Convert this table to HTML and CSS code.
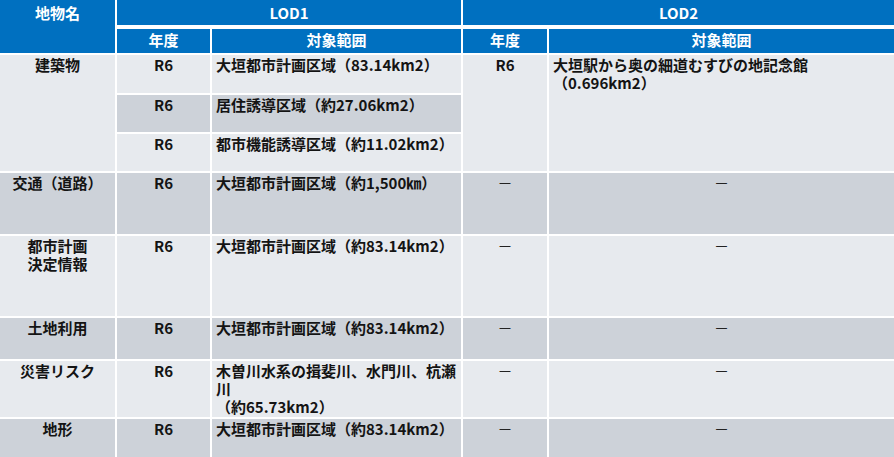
FILE: index.html
```html
<!DOCTYPE html>
<html lang="ja">
<head>
<meta charset="utf-8">
<title>3D都市モデル整備範囲</title>
<link rel="stylesheet" href="styles.css">
</head>
<body>
<table class="grid">
  <colgroup>
    <col class="c-name">
    <col class="c-year">
    <col class="c-area">
    <col class="c-year2">
    <col class="c-area2">
  </colgroup>
  <thead>
    <tr class="h-top">
      <th rowspan="2" class="name-head">地物名</th>
      <th colspan="2" class="lod">LOD1</th>
      <th colspan="2" class="lod last">LOD2</th>
    </tr>
    <tr class="h-sub">
      <th>年度</th>
      <th>対象範囲</th>
      <th>年度</th>
      <th class="last">対象範囲</th>
    </tr>
  </thead>
  <tbody>
    <tr class="r-bldg1">
      <td rowspan="3" class="name light">建築物</td>
      <td class="year light">R6</td>
      <td class="area light">大垣都市計画区域（83.14km2）</td>
      <td rowspan="3" class="year light">R6</td>
      <td rowspan="3" class="area light last">大垣駅から奥の細道むすびの地記念館<br>（0.696km2）</td>
    </tr>
    <tr class="r-bldg2">
      <td class="year dark">R6</td>
      <td class="area dark">居住誘導区域（約27.06km2）</td>
    </tr>
    <tr class="r-bldg3">
      <td class="year light">R6</td>
      <td class="area light">都市機能誘導区域（約11.02km2）</td>
    </tr>
    <tr class="r-tran">
      <td class="name dark">交通（道路）</td>
      <td class="year dark">R6</td>
      <td class="area dark">大垣都市計画区域（約1,500㎞）</td>
      <td class="year dark"><span class="dash">－</span></td>
      <td class="none dark last"><span class="dash">－</span></td>
    </tr>
    <tr class="r-urf">
      <td class="name light">都市計画<br>決定情報</td>
      <td class="year light">R6</td>
      <td class="area light">大垣都市計画区域（約83.14km2）</td>
      <td class="year light"><span class="dash">－</span></td>
      <td class="none light last"><span class="dash">－</span></td>
    </tr>
    <tr class="r-luse">
      <td class="name dark">土地利用</td>
      <td class="year dark">R6</td>
      <td class="area dark">大垣都市計画区域（約83.14km2）</td>
      <td class="year dark"><span class="dash">－</span></td>
      <td class="none dark last"><span class="dash">－</span></td>
    </tr>
    <tr class="r-risk">
      <td class="name light">災害リスク</td>
      <td class="year light">R6</td>
      <td class="area light">木曽川水系の揖斐川、水門川、杭瀬川<br>（約65.73km2）</td>
      <td class="year light"><span class="dash">－</span></td>
      <td class="none light last"><span class="dash">－</span></td>
    </tr>
    <tr class="r-dem">
      <td class="name dark">地形</td>
      <td class="year dark">R6</td>
      <td class="area dark">大垣都市計画区域（約83.14km2）</td>
      <td class="year dark"><span class="dash">－</span></td>
      <td class="none dark last"><span class="dash">－</span></td>
    </tr>
  </tbody>
</table>
</body>
</html>
```
FILE: styles.css
```css
html, body {
  margin: 0;
  padding: 0;
  background: #ffffff;
}

body {
  font-family: "Noto Sans CJK JP", "Noto Sans", sans-serif;
  font-size: 15px;
  line-height: 18px;
  color: #141414;
  overflow: hidden;
}

.grid {
  width: 894px;
  table-layout: fixed;
  border-collapse: separate;
  border-spacing: 0;
}

.c-name { width: 117px; }
.c-year { width: 95px; }
.c-area { width: 251px; }
.c-year2 { width: 86px; }
.c-area2 { width: 345px; }

.grid th,
.grid td {
  box-sizing: border-box;
  padding: 1px 4px 0;
  vertical-align: top;
  border-right: 2px solid #ffffff;
  border-bottom: 2px solid #ffffff;
  font-weight: 700;
}

.grid th {
  background: #0070c0;
  color: #ffffff;
  text-align: center;
  padding-top: 4px;
}

.grid .last {
  border-right: none;
}

.grid th.lod {
  border-bottom-width: 4px;
}

.h-top { height: 29px; }
.h-sub { height: 26px; }
.grid .h-sub th { padding-top: 2px; }

.r-bldg1 { height: 40px; }
.r-bldg2 { height: 39px; }
.r-bldg3 { height: 39px; }
.r-tran { height: 63px; }
.r-urf { height: 82px; }
.r-luse { height: 43px; }
.r-risk { height: 58px; }
.r-dem { height: 40px; }

.light { background: #e7eaee; }
.dark { background: #cdd2d9; }

.name,
.year,
.none {
  text-align: center;
}

.area {
  text-align: left;
}

.dash {
  font-weight: 400;
  color: #222222;
}
```
